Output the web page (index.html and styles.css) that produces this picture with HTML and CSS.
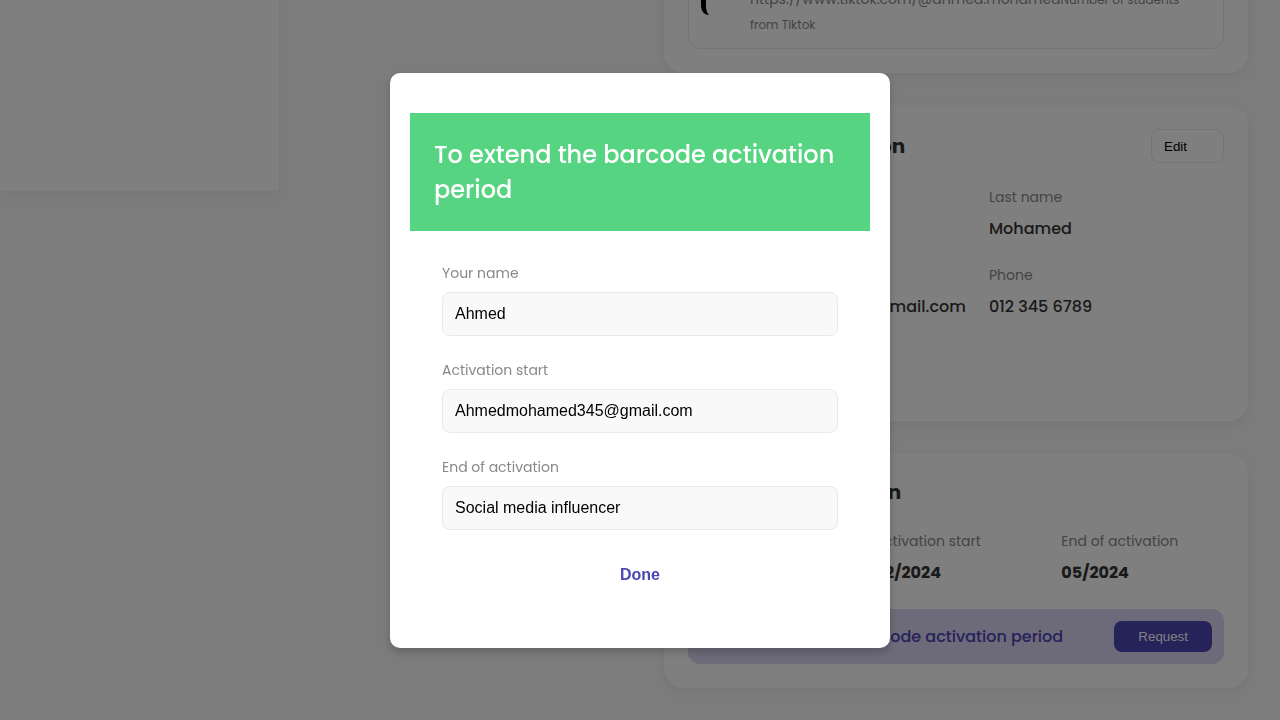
FILE: index.html
```html
<!DOCTYPE html>
<html lang="en">
<head>
<meta charset="utf-8">
<meta name="viewport" content="width=device-width, initial-scale=1">
<title>Profile</title>
<link rel="stylesheet" href="styles.css">
</head>
<body>
<div class="page">
  <aside class="sidebar"></aside>
  <main class="content">
    <section class="card card-social">
      <div class="social">
        <svg class="social-icon" width="37" height="48" viewBox="0 0 37 48" aria-hidden="true"><path d="M0 0H5V38C5 42 6 45 8 47C3 47 0 43 0 37Z"/></svg>
        <p class="social-text"><span class="social-url">https://www.tiktok.com/@ahmed.mohamed</span>Number of students from Tiktok</p>
      </div>
    </section>
    <section class="card card-personal">
      <header class="card-head">
        <h2>Personal information</h2>
        <button class="edit" type="button">Edit</button>
      </header>
      <dl class="details">
        <div><dt>First name</dt><dd>Ahmed</dd></div>
        <div><dt>Last name</dt><dd>Mohamed</dd></div>
        <div><dt>Email</dt><dd class="email">Ahmedmohamed345@gmail.com</dd></div>
        <div><dt>Phone</dt><dd>012 345 6789</dd></div>
      </dl>
    </section>
    <section class="card card-barcode">
      <h2>Barcode information</h2>
      <dl class="dates">
        <div><dt>Barcode</dt><dd>Active</dd></div>
        <div><dt>Activation start</dt><dd>02/2024</dd></div>
        <div><dt>End of activation</dt><dd>05/2024</dd></div>
      </dl>
      <div class="banner">
        <svg class="banner-icon" width="24" height="24" viewBox="0 0 24 24" aria-hidden="true"><path d="M4 5v14M8 5v14M12 5v14M16 5v14M20 5v14" stroke="currentColor" stroke-width="2"/></svg>
        <p>To extend the barcode activation period</p>
        <button class="request" type="button">Request</button>
      </div>
    </section>
  </main>
</div>
<div class="overlay">
  <div class="modal" role="dialog" aria-modal="true" aria-labelledby="modal-title">
    <h1 id="modal-title" class="modal-title">To extend the barcode activation period</h1>
    <form class="form">
      <div class="field"><label for="name">Your name</label><input id="name" type="text" value="Ahmed"></div>
      <div class="field"><label for="start">Activation start</label><input id="start" type="text" value="Ahmedmohamed345@gmail.com"></div>
      <div class="field"><label for="end">End of activation</label><input id="end" type="text" value="Social media influencer"></div>
      <button class="done" type="button">Done</button>
    </form>
  </div>
</div>
</body>
</html>
```
FILE: styles.css
```css
* { box-sizing: border-box; }

body {
  margin: 0;
  background: #f8f8f8;
  color: #333;
  font-family: Poppins, Inter, sans-serif;
  font-size: 16px;
  overflow: hidden;
}

h1, h2, p, dl, dd { margin: 0; }

button, input { font-family: "Liberation Sans", Arial, sans-serif; }

.page {
  display: flex;
  align-items: flex-start;
  height: 100vh;
  overflow: hidden;
}

.sidebar {
  flex: none;
  width: 280px;
  height: 191px;
  background: #fff;
  border-right: 1px solid #eee;
  box-shadow: 0 4px 12px rgba(0, 0, 0, 0.04);
}

.content {
  flex: 1;
  display: flex;
  flex-direction: column;
  gap: 32px;
  margin-top: -60px;
  padding: 0 32px 32px 384px;
}

.card {
  padding: 24px;
  background: #fff;
  border-radius: 20px;
  box-shadow: 0 4px 12px rgba(0, 0, 0, 0.05);
}

.card-social { min-height: 133px; }
.card-personal { min-height: 316px; }

h2 {
  font-size: 20px;
  line-height: 30px;
  font-weight: 700;
}

.social {
  display: flex;
  gap: 12px;
  padding: 3px 24px 11px 12px;
  min-height: 85px;
  border: 1px solid #e9e9e9;
  border-radius: 12px;
}

.social-icon { flex: none; }

.social-text {
  color: #888;
  font-size: 12px;
  line-height: 25px;
  padding-top: 19px;
}

.social-url { font-size: 14px; }

.card-head {
  display: flex;
  justify-content: space-between;
  align-items: center;
}

.edit {
  width: 73px;
  height: 34px;
  padding: 0 12px;
  text-align: left;
  color: #000;
  background: #fff;
  border: 1px solid #e9e9e9;
  border-radius: 8px;
}

dt {
  color: #888;
  font-size: 14px;
  line-height: 21px;
}

dd {
  margin-top: 9px;
  font-weight: 500;
  line-height: 24px;
}

.details {
  display: grid;
  grid-template-columns: 277px 1fr;
  gap: 24px;
  margin-top: 24px;
}

.email { text-align: right; }

.dates {
  display: grid;
  grid-template-columns: repeat(3, 1fr);
  gap: 24px;
  margin-top: 24px;
}

.dates dd { font-weight: 700; }

.banner {
  display: flex;
  align-items: center;
  gap: 16px;
  margin-top: 24px;
  padding: 12px;
  color: #4d44b5;
  font-weight: 500;
  background: #dad5f2;
  border-radius: 12px;
}

.banner-icon { flex: none; }

.request {
  margin-left: auto;
  padding: 8px 24px;
  line-height: 15px;
  color: #fff;
  background: #4d44b5;
  border: 0;
  border-radius: 8px;
}

.overlay {
  position: fixed;
  inset: 0;
  display: flex;
  align-items: center;
  justify-content: center;
  background: rgba(0, 0, 0, 0.5);
}

.modal {
  width: 500px;
  max-width: 100%;
  padding: 40px 20px;
  background: #fff;
  border-radius: 10px;
  box-shadow: 0 4px 8px rgba(0, 0, 0, 0.2);
}

.modal-title {
  padding: 24px;
  color: #fff;
  background: #56d482;
  font-size: 24px;
  line-height: 35px;
  font-weight: 500;
}

.form {
  display: flex;
  flex-direction: column;
  gap: 24px;
  padding: 32px 32px 12px;
}

.field {
  display: flex;
  flex-direction: column;
  gap: 8px;
}

.field label {
  color: #888;
  font-size: 14px;
  line-height: 21px;
}

.field input {
  width: 100%;
  height: 44px;
  padding: 0 12px;
  font-size: 16px;
  color: #000;
  background: #f9f9f9;
  border: 1px solid #e9e9e9;
  border-radius: 8px;
}

.done {
  align-self: center;
  height: 42px;
  padding: 0 12px;
  color: #4d44b5;
  font-size: 16px;
  font-weight: 700;
  background: none;
  border: 0;
}
```
